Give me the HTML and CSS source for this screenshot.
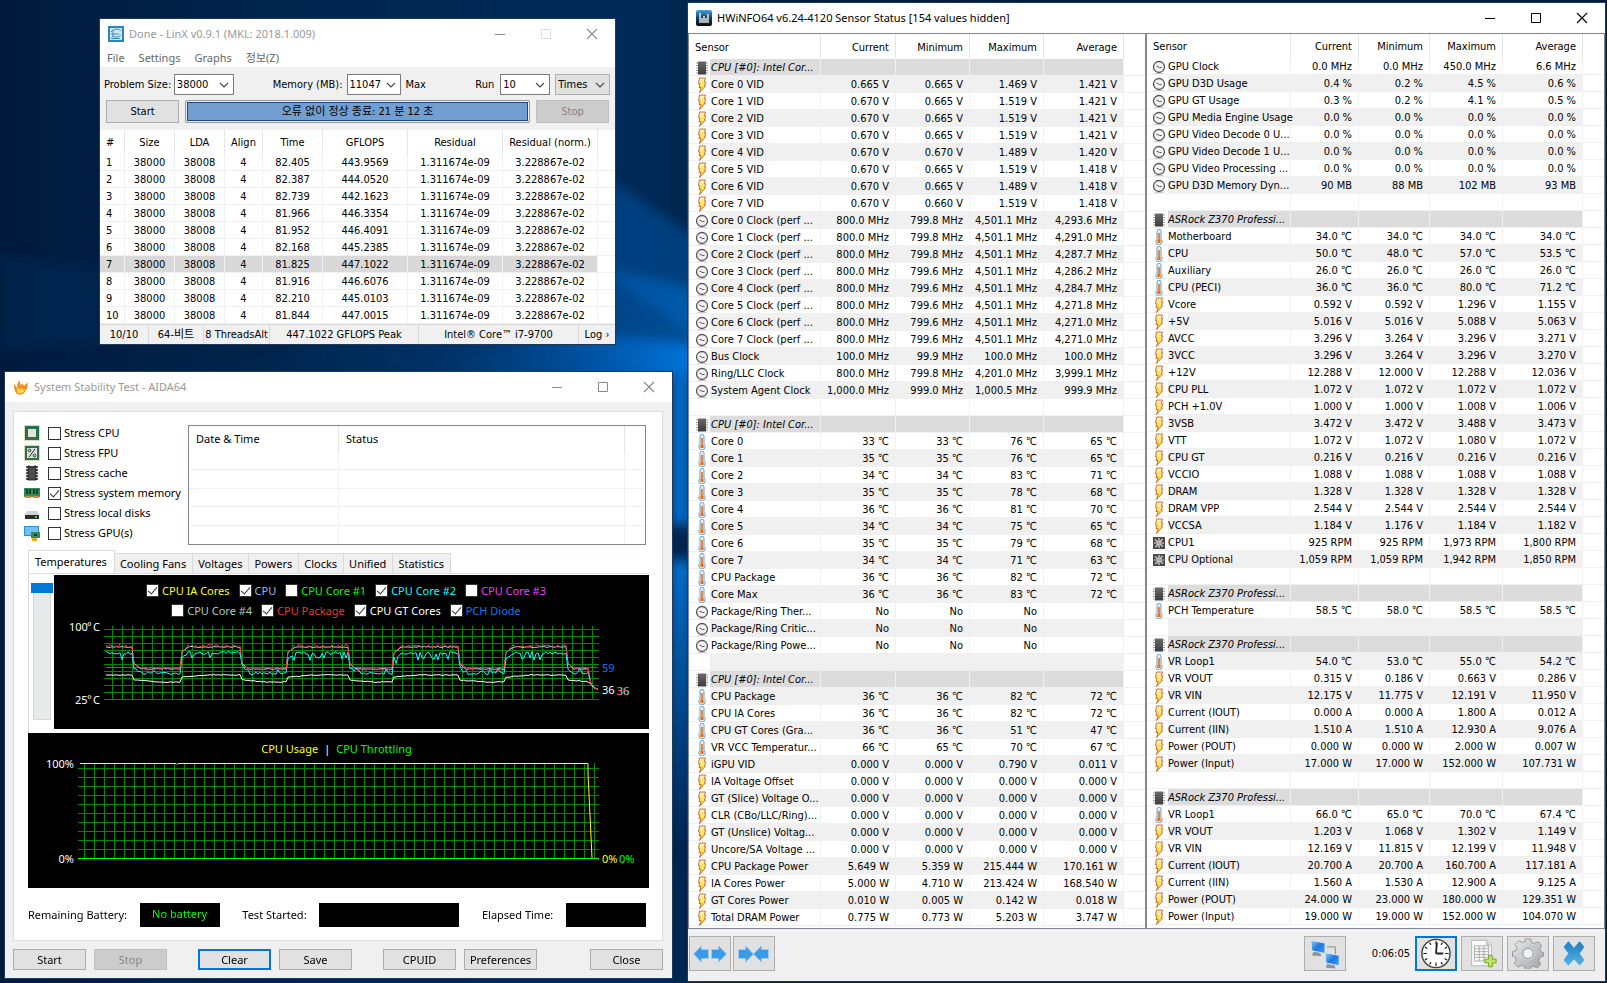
FILE: index.html
```html
<!DOCTYPE html>
<html lang="en">
<head>
<meta charset="utf-8">
<title>Desktop</title>
<link rel="stylesheet" href="styles.css">
</head>
<body>
<svg class="sprites" aria-hidden="true">
  <defs>
    <linearGradient id="gBolt" x1="0" y1="0" x2="0" y2="1"><stop offset="0" stop-color="#fff3c0"/><stop offset="1" stop-color="#ffd500"/></linearGradient>
    <linearGradient id="gChip" x1="0" y1="0" x2="0" y2="1"><stop offset="0" stop-color="#6a6a6a"/><stop offset="1" stop-color="#3c3c3c"/></linearGradient>
    <linearGradient id="gBlue" x1="0" y1="0" x2="1" y2="1"><stop offset="0" stop-color="#8fd0ff"/><stop offset=".5" stop-color="#1e78e0"/><stop offset="1" stop-color="#3fa0f4"/></linearGradient>
    <linearGradient id="gCross" x1="0" y1="0" x2="0" y2="1"><stop offset="0" stop-color="#1d7dbb"/><stop offset="1" stop-color="#55b4ec"/></linearGradient>
    <linearGradient id="gGear" x1="0" y1="0" x2="1" y2="1"><stop offset="0" stop-color="#e8ebec"/><stop offset="1" stop-color="#9da3a6"/></linearGradient>
    <linearGradient id="gHw" x1="0" y1="0" x2="0" y2="1"><stop offset="0" stop-color="#4aa3d8"/><stop offset=".5" stop-color="#14405c"/><stop offset="1" stop-color="#0a0a0a"/></linearGradient>
    <symbol id="bolt" viewBox="0 0 16 16"><path d="M5.500 1h6l-1.200 3.800h1.400L10.500 9h1L5.500 15.500l1.600-5H5l.8-3.700H4.500z" fill="url(#gBolt)" stroke="#c4622d" stroke-width=".9"/></symbol>
    <symbol id="clock" viewBox="0 0 16 16"><path d="M3.500 14.500h9" stroke="#ccc" stroke-width="1"/><circle cx="8" cy="8" r="5.500" fill="#f2f2f2" stroke="#555" stroke-width="1.300"/><path d="M5.500 7l3 1.500h2" fill="none" stroke="#555" stroke-width="1"/></symbol>
    <symbol id="thermo" viewBox="0 0 16 16"><path d="M6 2.200a2 2 0 0 1 4 0v8a3.200 3.200 0 1 1-4 0z" fill="#dff0fb" stroke="#6f9fc4" stroke-width="1"/><path d="M7.200 4h1.600v7h.8v3H6.400v-3h.8z" fill="#f26a12"/></symbol>
    <symbol id="chip" viewBox="0 0 16 16"><path d="M2 3h12M2 5.500h12M2 8h12M2 10.500h12M2 13h12" stroke="#999" stroke-width="1"/><path d="M4 1.500h8v13H4z" fill="url(#gChip)"/></symbol>
    <symbol id="fan" viewBox="0 0 16 16"><path d="M2 2h12v12H2z" fill="#4a4a4a"/><path d="M8 7V3M8 9v4M7 8H3M9 8h4M7 7L4 4.500M9 9l3 2.500M9 7l2.500-3M7 9l-2.500 3" stroke="#ddd" stroke-width="1.200"/><circle cx="8" cy="8" r="1.400" fill="#c9a0a0"/></symbol>
    <symbol id="chev" viewBox="0 0 10 6"><path d="M1 1l4 4 4-4" fill="none" stroke="#444" stroke-width="1.100"/></symbol>
    <symbol id="min" viewBox="0 0 12 12"><path d="M1 6.500h10" stroke="currentColor"/></symbol>
    <symbol id="max" viewBox="0 0 12 12"><path d="M1.500 1.500h9v9h-9z" fill="none" stroke="currentColor"/></symbol>
    <symbol id="close" viewBox="0 0 12 12"><path d="M1 1l10 10M11 1L1 11" stroke="currentColor" stroke-width="1.100"/></symbol>
    <symbol id="arrow" viewBox="0 0 16 18"><path d="M0.500 4.500h7V.8L15.500 9l-8 8.200v-3.700h-7z" fill="#3a9ae8" stroke="#a5cdea" stroke-width=".8"/></symbol>
  </defs>
</svg>

<main class="desktop">
  <svg class="wallpaper" viewBox="0 0 1607 983" preserveAspectRatio="none" aria-hidden="true">
    <defs>
      <linearGradient id="wpBase" x1="0" y1="0" x2="1" y2="0"><stop offset="0" stop-color="#001a3c"/><stop offset=".2" stop-color="#00264f"/><stop offset=".4" stop-color="#002a58"/><stop offset=".5" stop-color="#001a38"/></linearGradient>
      <linearGradient id="wpBeam" x1="0" y1="0" x2="1" y2="0"><stop offset="0" stop-color="#003a78" stop-opacity="0"/><stop offset=".5" stop-color="#0055a8" stop-opacity=".5"/><stop offset="1" stop-color="#0078e0"/></linearGradient>
      <linearGradient id="wpFade" x1="0" y1="0" x2="0" y2="1"><stop offset="0" stop-color="#0070d0"/><stop offset="1" stop-color="#00204a"/></linearGradient>
      <filter id="wpBlur"><feGaussianBlur stdDeviation="6"/></filter>
    </defs>
    <path d="M0 0h1607v983H0z" fill="url(#wpBase)"/>
    <g filter="url(#wpBlur)">
      <path d="M0 255L100 268V345L0 350z" fill="#003468" opacity=".35"/>
      <path d="M610 180L700 240V340L610 275z" fill="#004a90" opacity=".7"/>
      <path d="M200 372L615 270L700 290V380z" fill="url(#wpBeam)" opacity=".5"/>
      <path d="M560 330L700 345V378H400z" fill="url(#wpBeam)"/>
      <path d="M670 370h22v155h-22z" fill="#0068c4"/>
      <path d="M670 560h22v300h-22z" fill="url(#wpFade)"/>
    </g>
  </svg>

  <section class="window linx" aria-label="LinX">
    <header class="titlebar inactive">
      <svg class="app-icon" viewBox="0 0 16 16"><path d="M0 0h16v16H0z" fill="#2a86b8"/><path d="M2 2h12v12H2z" fill="#cfe6f2"/><path d="M3 6c3-4 9-3 10-1M3 8h8M4 10c3 2 7 1 9-1M5 4v7M3 12.500h9" stroke="#3b8fbd" fill="none"/></svg>
      <h1 class="title">Done - LinX v0.9.1 (MKL: 2018.1.009)</h1>
      <button class="cap" aria-label="Minimize"><svg><use href="#min"/></svg></button>
      <button class="cap faint" aria-label="Maximize" disabled><svg><use href="#max"/></svg></button>
      <button class="cap" aria-label="Close"><svg><use href="#close"/></svg></button>
    </header>
    <nav class="menu">
      <button>File</button><button>Settings</button><button>Graphs</button><button>정보(Z)</button>
    </nav>
    <div class="linx-body">
      <div class="linx-row">
        <label class="size" for="size">Problem Size:</label>
        <span class="combo w60"><select id="size"><option>38000</option></select><svg><use href="#chev"/></svg></span>
        <label class="mem" for="mem">Memory (MB):</label>
        <span class="combo w55"><select id="mem"><option>11047</option></select><svg><use href="#chev"/></svg></span>
        <span class="max">Max</span>
        <label class="run" for="run">Run</label>
        <span class="combo w50"><select id="run"><option>10</option></select><svg><use href="#chev"/></svg></span>
        <span class="combo w55 gray"><select id="unit" aria-label="Run unit"><option>Times</option></select><svg><use href="#chev"/></svg></span>
      </div>
      <div class="linx-row second">
        <button class="btn">Start</button>
        <div class="progress" role="status">오류 없이 정상 종료: 21 분 12 초</div>
        <button class="btn" disabled>Stop</button>
      </div>
    </div>
    <table class="runs">
      <colgroup><col class="c25"><col class="c50"><col class="c50"><col class="c38"><col class="c60"><col class="c85"><col class="c95"><col class="c95"><col></colgroup>
      <thead><tr><th>#</th><th>Size</th><th>LDA</th><th>Align</th><th>Time</th><th>GFLOPS</th><th>Residual</th><th>Residual (norm.)</th><th class="fill"></th></tr></thead>
      <tbody id="runs"></tbody>
    </table>
    <footer class="status">
      <span class="s49">10/10</span><span class="s55">64-비트</span><span class="s66">8 ThreadsAlt</span><span class="s150">447.1022 GFLOPS Peak</span><span class="sgrow">Intel® Core™ i7-9700</span><span class="s36">Log ›</span>
    </footer>
  </section>

  <section class="window aida" aria-label="System Stability Test">
    <header class="titlebar inactive">
      <svg class="app-icon" viewBox="0 0 16 16"><path d="M4 15C1 11 1 8 1 5l3 4c0-3 1-6 2-8l2 6 1-3 2 3 4-4c-1 4 0 7-4 11-2 2-5 2-7 1z" fill="#f58a1a"/><path d="M5 14c-2-3-1-5 0-6l2 3 2-3 1 3 2-1c0 2-2 5-7 4z" fill="#ffdb4a"/></svg>
      <h1 class="title">System Stability Test - AIDA64</h1>
      <button class="cap" aria-label="Minimize"><svg><use href="#min"/></svg></button>
      <button class="cap" aria-label="Maximize"><svg><use href="#max"/></svg></button>
      <button class="cap" aria-label="Close"><svg><use href="#close"/></svg></button>
    </header>
    <div class="aida-body">
      <div class="panel">
        <div class="top">
          <div class="stress">
            <label><svg viewBox="0 0 16 16"><path d="M.5.5h15v15H.5z" fill="none" stroke="#c9b45a" stroke-dasharray="1 1"/><path d="M1 1h14v14H1z" fill="#2c6e49"/><path d="M4 4h8v8H4z" fill="#dfe3df"/></svg><input type="checkbox">Stress CPU</label>
            <label><svg viewBox="0 0 16 16"><path d="M.5.5h15v15H.5z" fill="none" stroke="#c9b45a" stroke-dasharray="1 1"/><path d="M1 1h14v14H1z" fill="#2c6e49"/><path d="M3 3h10v10H3z" fill="#dfe3df"/><path d="M11 4l-6 8" stroke="#222"/><circle cx="5.500" cy="5.500" r="1.300" fill="none" stroke="#222"/><circle cx="10.500" cy="10.500" r="1.300" fill="none" stroke="#222"/></svg><input type="checkbox">Stress FPU</label>
            <label><svg viewBox="0 0 16 16"><path d="M2 2h12M2 5h12M2 8h12M2 11h12M2 14h12" stroke="#222" stroke-width="1.500"/><path d="M4 1h2l2 2 2-2h2v14H4z" fill="#4c4c4c" stroke="#111" stroke-width=".8"/></svg><input type="checkbox">Stress cache</label>
            <label><svg viewBox="0 0 16 16"><path d="M0 3h16v9H0z" fill="#2f8a5c"/><path d="M2 4h2v5H2zM5 4h2v5H5zM9 4h2v5H9zM12 4h2v5h-2z" fill="#173f2a"/><path d="M1 11h6v2H1zM9 11h6v2H9z" fill="#d98b3a"/></svg><input type="checkbox" checked>Stress system memory</label>
            <label><svg viewBox="0 0 16 16"><path d="M3 6h10l2 4H1z" fill="#cfd3d6"/><path d="M1 10h14v4H1z" fill="#2a2d30"/><path d="M11 11h2v2h-2z" fill="#4ad04a"/></svg><input type="checkbox">Stress local disks</label>
            <label><svg viewBox="0 0 16 16"><path d="M0 1h15v10H0z" fill="#2d8fd6"/><path d="M1 2h13v8H1z" fill="#6fc0f0"/><path d="M7 7h9v6H7z" fill="#2f8a5c"/><path d="M10 9h3v2h-3z" fill="#173f2a"/><path d="M8 13h5v3H8z" fill="#f0a820"/></svg><input type="checkbox">Stress GPU(s)</label>
          </div>
          <table class="log">
            <colgroup><col class="c150"><col><col class="c20"></colgroup>
            <thead><tr><th>Date &amp; Time</th><th>Status</th><th></th></tr></thead>
            <tbody><tr><td></td><td></td><td></td></tr><tr><td></td><td></td><td></td></tr><tr><td></td><td></td><td></td></tr><tr><td></td><td></td><td></td></tr><tr><td></td><td></td><td></td></tr></tbody>
          </table>
        </div>
        <div class="tabs" role="tablist">
          <button role="tab" class="on" aria-selected="true">Temperatures</button><button role="tab">Cooling Fans</button><button role="tab">Voltages</button><button role="tab">Powers</button><button role="tab">Clocks</button><button role="tab">Unified</button><button role="tab">Statistics</button>
        </div>
        <div class="page">
          <div class="slider"><span class="thumb"></span><span class="track"></span></div>
          <div class="graph">
            <div class="legend">
              <label class="yellow"><input type="checkbox" checked>CPU IA Cores</label>
              <label class="pale"><input type="checkbox" checked>CPU</label>
              <label class="green"><input type="checkbox">CPU Core #1</label>
              <label class="cyan"><input type="checkbox" checked>CPU Core #2</label>
              <label class="magenta"><input type="checkbox">CPU Core #3</label>
            </div>
            <div class="legend">
              <label class="sage"><input type="checkbox">CPU Core #4</label>
              <label class="red"><input type="checkbox" checked>CPU Package</label>
              <label class="white"><input type="checkbox" checked>CPU GT Cores</label>
              <label class="blue"><input type="checkbox" checked>PCH Diode</label>
            </div>
            <svg class="plot" id="temps" viewBox="54 621 595 108" role="img" aria-label="Temperatures graph"></svg>
          </div>
        </div>
        <div class="graph usage">
          <p class="usage-title"><span class="yellow">CPU Usage</span><span class="white">|</span><span class="green">CPU Throttling</span></p>
          <svg class="plot" id="usage" viewBox="28 758 621 130" role="img" aria-label="CPU usage graph"></svg>
        </div>
        <div class="info">
          <span>Remaining Battery:</span><output class="led w80">No battery</output>
          <span>Test Started:</span><output class="led w140"></output>
          <span>Elapsed Time:</span><output class="led w80"></output>
        </div>
      </div>
      <div class="actions">
        <button class="btn">Start</button><button class="btn" disabled>Stop</button>
        <button class="btn focus gap">Clear</button><button class="btn">Save</button>
        <button class="btn gap">CPUID</button><button class="btn">Preferences</button>
        <button class="btn end">Close</button>
      </div>
    </div>
  </section>

  <section class="window hwinfo" aria-label="HWiNFO64">
    <header class="titlebar">
      <svg class="app-icon" viewBox="0 0 16 16"><rect width="16" height="16" rx="2" fill="url(#gHw)"/><path d="M4 3v10M8 6v7M12 4v9M6 8v5M10 8v5" stroke="#fff" stroke-width="1.300"/></svg>
      <h1 class="title">HWiNFO64 v6.24-4120 Sensor Status [154 values hidden]</h1>
      <button class="cap" aria-label="Minimize"><svg><use href="#min"/></svg></button>
      <button class="cap" aria-label="Maximize"><svg><use href="#max"/></svg></button>
      <button class="cap" aria-label="Close"><svg><use href="#close"/></svg></button>
    </header>
    <div class="panes">
      <div class="pane left">
        <table class="sensors">
          <colgroup><col class="c132"><col class="c75"><col class="c74"><col class="c74"><col class="c80"><col></colgroup>
          <thead><tr><th>Sensor</th><th>Current</th><th>Minimum</th><th>Maximum</th><th>Average</th><th class="fill"></th></tr></thead>
          <tbody id="left"></tbody>
        </table>
      </div>
      <div class="pane right">
        <table class="sensors">
          <colgroup><col class="c144"><col class="c68"><col class="c71"><col class="c73"><col class="c80"><col></colgroup>
          <thead><tr><th>Sensor</th><th>Current</th><th>Minimum</th><th>Maximum</th><th>Average</th><th class="fill"></th></tr></thead>
          <tbody id="right"></tbody>
        </table>
      </div>
    </div>
    <footer class="tools">
      <div class="pair">
        <button class="tool" aria-label="Expand columns"><svg viewBox="0 0 34 31"><use href="#arrow" x="0" y="0" width="16" height="18" transform="translate(16 7) scale(-1 1)"/><use href="#arrow" x="18" y="7" width="16" height="18"/></svg></button>
        <button class="tool" aria-label="Shrink columns"><svg viewBox="0 0 34 31"><use href="#arrow" x="1" y="7" width="16" height="18"/><use href="#arrow" x="0" y="0" width="16" height="18" transform="translate(32 7) scale(-1 1)"/></svg></button>
      </div>
      <button class="tool push" aria-label="Remote monitoring"><svg viewBox="0 0 36 32"><path d="M20 9h9v10" fill="none" stroke="#888"/><path d="M6 14l7 1 1 4-10-1z" fill="#8d9499"/><path d="M3 2l15 3v11L4 13z" fill="url(#gBlue)" stroke="#dfe6ea"/><path d="M20 27l8 1 1 4-10-1z" fill="#8d9499"/><path d="M18 15l15 3v11l-14-3z" fill="url(#gBlue)" stroke="#dfe6ea"/></svg></button>
      <time class="elapsed">0:06:05</time>
      <button class="tool focus" aria-label="Reset clock"><svg viewBox="0 0 36 34"><circle cx="18" cy="17" r="15.500" fill="#fff" stroke="#3c3c3c" stroke-width="1.500"/><path d="M18 3v4M18 27v4M4 17h4M28 17h4M11 4.900l1.500 2.600M23.500 26.500l1.500 2.600M5.900 24l2.600-1.500M27.500 11.500l2.600-1.500M25 4.900l-1.500 2.600M12.500 26.500L11 29.100M30.100 24l-2.600-1.500M8.500 11.500L5.900 10" stroke="#222" stroke-width="1.300"/><path d="M18 17l1-12M18 17h8" stroke="#222" stroke-width="2" fill="none"/></svg></button>
      <button class="tool" aria-label="Save log"><svg viewBox="0 0 36 32"><path d="M7 2h16l5 5v22H7z" fill="#fafafa" stroke="#b5b5b5"/><path d="M23 2v5h5" fill="#ddd" stroke="#b5b5b5"/><path d="M10 8h15v16H10zM10 11h15M10 14h15M10 17h15M10 20h15M15 8v16M20 8v16" fill="none" stroke="#999" stroke-width=".8"/><path d="M25 18h4v4h4v4h-4v4h-4v-4h-4v-4h4z" fill="#c3e26a" stroke="#6fa51e"/></svg></button>
      <button class="tool" aria-label="Settings"><svg viewBox="0 0 36 34"><path d="M15 1h6l1 4 3 1 4-2 4 4-2 4 1 3 3 1v4l-4 1-1 4 2 4-4 4-4-2-3 1-1 3h-5l-1-4-3-1-4 2-4-4 2-4-1-3-3-1v-5l4-1 1-3-2-4 4-4 4 2 3-1z" fill="url(#gGear)" stroke="#8f9598"/><circle cx="18" cy="17" r="8" fill="#c7ccce"/><circle cx="18" cy="17" r="5.500" fill="#f2f2f2" stroke="#8f9598"/></svg></button>
      <button class="tool" aria-label="Close sensors"><svg viewBox="0 0 36 32"><path d="M7 9l5-6 6 7 6-7 5 6-5 7 5 7-5 6-6-7-6 7-5-6 5-7z" fill="url(#gCross)"/></svg></button>
    </footer>
  </section>
</main>
<script src="app.js"></script>
</body>
</html>
```

FILE: styles.css
```css
* { box-sizing: border-box; }
body { margin: 0; background: #001a3c; }
button, select, input, output { font: inherit; color: inherit; }
button { padding: 0; border: 0; background: none; }
.sprites { position: absolute; width: 0; height: 0; }
.desktop { position: relative; min-height: 100vh; overflow: hidden; font: 11px/16px "Noto Sans", "Noto Sans CJK KR", sans-serif; color: #000; }
.wallpaper { position: absolute; inset: 0; width: 100%; height: 100%; }

.window { position: absolute; background: #f0f0f0; outline: 1px solid #1d3a5a; }
.linx { left: 100px; top: 19px; width: 515px; font-family: "DejaVu Sans Condensed", "Noto Sans CJK KR", "Noto Sans", sans-serif; }
.aida { left: 5px; top: 372px; width: 667px; }
.hwinfo { left: 688px; right: 2px; top: 3px; font-family: "DejaVu Sans Condensed", "Noto Sans", sans-serif; }

.titlebar { display: flex; align-items: center; height: 30px; padding-left: 8px; background: #fff; }
.title { flex: 1; margin: 0; padding-left: 5px; font: 11px/16px "Noto Sans", sans-serif; white-space: nowrap; }
.inactive .title { color: #999; }
.app-icon { width: 16px; height: 16px; }
.cap { display: flex; align-items: center; justify-content: center; width: 46px; height: 30px; }
.cap svg { width: 12px; height: 12px; }
.inactive .cap { color: #8a8a8a; }
.inactive .faint { color: #ddd; }

.btn { height: 21px; width: 73px; border: 1px solid #adadad; background: #e1e1e1; text-align: center; line-height: 18px; }
.btn:disabled { background: #ccc; border-color: #bfbfbf; color: #838383; }
.btn.focus { border: 2px solid #0078d7; line-height: 16px; }

/* LinX */
.menu { display: flex; gap: 14px; height: 18px; padding-left: 7px; background: #fff; color: #666; font: 11px/18px "Noto Sans", "Noto Sans CJK KR", sans-serif; }
.linx-body { padding: 7px 5px 7px 4px; height: 63px; }
.linx-row { display: flex; align-items: center; height: 21px; white-space: nowrap; }
.linx-row.second { margin-top: 5px; height: 23px; gap: 6px; padding: 0 1px 0 2px; }
.linx-row .size { width: 70px; }
.linx-row .mem { width: 113px; padding-right: 4px; text-align: right; }
.linx-row .max { width: 74px; padding-left: 4px; }
.linx-row .run { width: 25px; }
.second .btn { height: 23px; }
.combo { display: grid; align-items: center; height: 21px; border: 1px solid #7a7a7a; background: #fff; }
.combo select { grid-area: 1 / 1; width: 100%; height: 19px; border: 0; padding: 0 2px; background: none; appearance: none; }
.combo svg { grid-area: 1 / 1; justify-self: end; width: 10px; height: 6px; margin-right: 4px; pointer-events: none; }
.combo.gray { margin-left: 5px; border-color: #adadad; background: #e1e1e1; }
.w60 { width: 60px; }
.w55 { width: 55px; }
.w50 { width: 50px; }
.progress { flex: 1; height: 23px; border: 1px solid #999; border-radius: 2px; padding: 0; background: #729fcf; box-shadow: inset 0 0 0 1px #f0f0f0, inset 0 0 0 2px #1b4588; text-align: center; line-height: 21px; }

table { border-collapse: separate; border-spacing: 0; table-layout: fixed; width: 100%; background: #fff; }
th, td { padding: 0; font-weight: normal; white-space: nowrap; overflow: hidden; }
th { padding-top: 2px; border-right: 1px solid #e5e5e5; }
td { height: 17px; padding-top: 2px; line-height: 14px; border-right: 1px solid #f0f0f0; border-bottom: 1px solid #f0f0f0; }
th.fill, td.fill { border-right: 0; }
.c20 { width: 20px; } .c25 { width: 25px; } .c38 { width: 38px; } .c50 { width: 50px; } .c60 { width: 60px; }
.c68 { width: 68px; } .c71 { width: 71px; } .c73 { width: 73px; } .c74 { width: 74px; } .c75 { width: 75px; }
.c80 { width: 80px; } .c85 { width: 85px; } .c95 { width: 95px; } .c132 { width: 132px; } .c144 { width: 144px; } .c150 { width: 150px; }
.runs th { height: 24px; text-align: center; }
.runs td { text-align: center; }
.runs th:first-child, .runs td:first-child { text-align: left; padding-left: 6px; }
.runs tr.sel td:not(.fill) { background: #d9d9d9; }
.status { display: flex; height: 20px; border-top: 1px solid #d9d9d9; line-height: 20px; text-align: center; white-space: nowrap; }
.status span { border-right: 1px solid #d9d9d9; overflow: hidden; }
.status span:last-child { border-right: 0; }
.s49 { width: 49px; } .s55 { width: 55px; } .s66 { width: 66px; } .s150 { width: 149px; } .sgrow { flex: 1; } .s36 { width: 36px; }

/* AIDA64 */
.aida-body { padding: 9px 9px 8px 8px; }
.panel { border: 1px solid #dcdcdc; background: #fff; padding: 13px 13px 13px 14px; }
.top { display: flex; justify-content: space-between; height: 120px; padding-right: 3px; }
.stress { display: flex; flex-direction: column; margin: -2px 0 0 -4px; }
.stress label { display: flex; align-items: center; height: 20px; white-space: nowrap; }
.stress svg { width: 16px; height: 16px; margin-right: 8px; }
input[type="checkbox"] { appearance: none; flex: none; width: 13px; height: 13px; margin: 0 3px 0 0; border: 1px solid #333; background: #fff; display: grid; place-items: center; }
input[type="checkbox"]:checked::before { content: ""; width: 4px; height: 8px; margin-bottom: 2px; border: solid #333; border-width: 0 1px 1px 0; transform: rotate(40deg); }
.log { width: 458px; height: 120px; border: 1px solid #828790; }
.log th { height: 26px; text-align: left; padding: 0 0 0 7px; }
.log td { height: 18px; padding: 0; line-height: 12px; }
.log th:last-child, .log td:last-child { border-right: 0; }
.log tr:last-child td { border-bottom: 0; }
.tabs { display: flex; align-items: flex-end; height: 23px; margin-top: 5px; }
.tabs button { height: 20px; padding: 0 6px 0 5px; border: 1px solid #d9d9d9; border-left: 0; border-bottom: 0; background: #f0f0f0; line-height: 18px; white-space: nowrap; }
.tabs .on { height: 23px; padding: 0 7px 0 6px; border-left: 1px solid #d9d9d9; background: #fff; }
.page { display: flex; border: 1px solid #dcdcdc; border-width: 1px 0 0 1px; height: 160px; }
.slider { display: flex; flex-direction: column; align-items: center; width: 25px; padding-top: 9px; }
.thumb { width: 22px; height: 10px; background: #0078d7; }
.track { width: 18px; height: 127px; border: 1px solid #d6d6d6; border-top: 0; background: #e7eaea; }
.graph { flex: 1; height: 154px; margin-top: 1px; background: #000; }
.legend { display: flex; justify-content: center; gap: 9px; height: 21px; padding-right: 11px; }
.legend:first-child { padding-top: 5px; height: 25px; }
.legend label { display: flex; align-items: center; height: 21px; white-space: nowrap; }
.plot { display: block; width: 100%; overflow: visible; }
.plot text { font: 11px "Noto Sans", sans-serif; }
.usage { height: 155px; margin-top: 0; }
.usage-title { display: flex; justify-content: center; gap: 6px; margin: 0; height: 25px; padding: 8px 4px 0 0; }
.yellow { color: #ff0; } .pale { color: #9ab8f0; } .green { color: #0f0; } .cyan { color: #0ff; } .magenta { color: #f03cf0; }
.sage { color: #b4c8b4; } .red { color: #f03030; } .white { color: #fff; } .blue { color: #0a78f0; }
.info { display: flex; align-items: center; justify-content: space-between; margin: 15px 3px 0 0; height: 24px; }
.led { height: 24px; background: #000; color: #0f0; text-align: center; line-height: 22px; margin-left: -10px; }
.w80 { width: 80px; } .w140 { width: 140px; }
.actions { display: flex; gap: 8px; margin-top: 8px; }
.actions .gap { margin-left: 23px; }
.actions .end { margin-left: auto; }

/* HWiNFO */
.panes { display: flex; }
.pane { border: 1px solid #828790; padding-bottom: 2px; background: #fff; min-width: 0; }
.pane.left { flex: 458 1 0; }
.pane.right { flex: 459 1 0; padding-bottom: 3px; }
.left .sensors th { height: 25px; }
.right .sensors th { height: 24px; }
.sensors th, .sensors td { text-align: right; padding-right: 6px; }
.sensors th:first-child { text-align: left; padding-left: 6px; }
.sensors td:first-child { text-align: left; padding-left: 5px; padding-right: 0; overflow: visible; }
.name { display: flex; align-items: center; height: 14px; gap: 1px; }
.name svg { flex: none; width: 16px; height: 16px; }
.right .sensors td:first-child { padding-left: 4px; }
.shade td:not(.fill) { background: #f0f0f0; }
.head td:not(.fill) { background: #dcdcdc; font-style: italic; }
.shade td:first-child:not(.fill) { background: linear-gradient(90deg, #fff 21px, #f0f0f0 21px); }
.head td:first-child:not(.fill) { background: linear-gradient(90deg, #fff 21px, #dcdcdc 21px); }
.tools { display: flex; align-items: center; gap: 4px; height: 52px; padding: 0 10px 3px 1px; }
.pair { display: flex; gap: 2px; }
.tool { display: grid; place-items: center; width: 42px; height: 35px; border: 1px solid #adadad; background: #e1e1e1; }
.tool.focus { border: 2px solid #0078d7; }
.tool svg { width: 34px; height: 31px; }
.push { margin-left: auto; }
.elapsed { width: 61px; text-align: right; padding-right: 1px; }
```

FILE: app.js
```js
const ICONS = { v: "bolt", c: "clock", t: "thermo", h: "chip", f: "fan" };

// icon | name | current | minimum | maximum | average
const LEFT = `h|CPU [#0]: Intel Cor...
v|Core 0 VID|0.665 V|0.665 V|1.469 V|1.421 V
v|Core 1 VID|0.670 V|0.665 V|1.519 V|1.421 V
v|Core 2 VID|0.670 V|0.665 V|1.519 V|1.421 V
v|Core 3 VID|0.670 V|0.665 V|1.519 V|1.421 V
v|Core 4 VID|0.670 V|0.670 V|1.489 V|1.420 V
v|Core 5 VID|0.670 V|0.665 V|1.519 V|1.418 V
v|Core 6 VID|0.670 V|0.665 V|1.489 V|1.418 V
v|Core 7 VID|0.670 V|0.660 V|1.519 V|1.418 V
c|Core 0 Clock (perf ...|800.0 MHz|799.8 MHz|4,501.1 MHz|4,293.6 MHz
c|Core 1 Clock (perf ...|800.0 MHz|799.8 MHz|4,501.1 MHz|4,291.0 MHz
c|Core 2 Clock (perf ...|800.0 MHz|799.8 MHz|4,501.1 MHz|4,287.7 MHz
c|Core 3 Clock (perf ...|800.0 MHz|799.6 MHz|4,501.1 MHz|4,286.2 MHz
c|Core 4 Clock (perf ...|800.0 MHz|799.6 MHz|4,501.1 MHz|4,284.7 MHz
c|Core 5 Clock (perf ...|800.0 MHz|799.6 MHz|4,501.1 MHz|4,271.8 MHz
c|Core 6 Clock (perf ...|800.0 MHz|799.6 MHz|4,501.1 MHz|4,271.0 MHz
c|Core 7 Clock (perf ...|800.0 MHz|799.6 MHz|4,501.1 MHz|4,271.0 MHz
c|Bus Clock|100.0 MHz|99.9 MHz|100.0 MHz|100.0 MHz
c|Ring/LLC Clock|800.0 MHz|799.8 MHz|4,201.0 MHz|3,999.1 MHz
c|System Agent Clock|1,000.0 MHz|999.0 MHz|1,000.5 MHz|999.9 MHz

h|CPU [#0]: Intel Cor...
t|Core 0|33 ℃|33 ℃|76 ℃|65 ℃
t|Core 1|35 ℃|35 ℃|76 ℃|65 ℃
t|Core 2|34 ℃|34 ℃|83 ℃|71 ℃
t|Core 3|35 ℃|35 ℃|78 ℃|68 ℃
t|Core 4|36 ℃|36 ℃|81 ℃|70 ℃
t|Core 5|34 ℃|34 ℃|75 ℃|65 ℃
t|Core 6|35 ℃|35 ℃|79 ℃|68 ℃
t|Core 7|34 ℃|34 ℃|71 ℃|63 ℃
t|CPU Package|36 ℃|36 ℃|82 ℃|72 ℃
t|Core Max|36 ℃|36 ℃|83 ℃|72 ℃
c|Package/Ring Ther...|No|No|No|
c|Package/Ring Critic...|No|No|No|
c|Package/Ring Powe...|No|No|No|

h|CPU [#0]: Intel Cor...
t|CPU Package|36 ℃|36 ℃|82 ℃|72 ℃
t|CPU IA Cores|36 ℃|36 ℃|82 ℃|72 ℃
t|CPU GT Cores (Gra...|36 ℃|36 ℃|51 ℃|47 ℃
t|VR VCC Temperatur...|66 ℃|65 ℃|70 ℃|67 ℃
v|iGPU VID|0.000 V|0.000 V|0.790 V|0.011 V
v|IA Voltage Offset|0.000 V|0.000 V|0.000 V|0.000 V
v|GT (Slice) Voltage O...|0.000 V|0.000 V|0.000 V|0.000 V
v|CLR (CBo/LLC/Ring)...|0.000 V|0.000 V|0.000 V|0.000 V
v|GT (Unslice) Voltag...|0.000 V|0.000 V|0.000 V|0.000 V
v|Uncore/SA Voltage ...|0.000 V|0.000 V|0.000 V|0.000 V
v|CPU Package Power|5.649 W|5.359 W|215.444 W|170.161 W
v|IA Cores Power|5.000 W|4.710 W|213.424 W|168.540 W
v|GT Cores Power|0.010 W|0.005 W|0.142 W|0.018 W
v|Total DRAM Power|0.775 W|0.773 W|5.203 W|3.747 W`;

const RIGHT = `c|GPU Clock|0.0 MHz|0.0 MHz|450.0 MHz|6.6 MHz
c|GPU D3D Usage|0.4 %|0.2 %|4.5 %|0.6 %
c|GPU GT Usage|0.3 %|0.2 %|4.1 %|0.5 %
c|GPU Media Engine Usage|0.0 %|0.0 %|0.0 %|0.0 %
c|GPU Video Decode 0 U...|0.0 %|0.0 %|0.0 %|0.0 %
c|GPU Video Decode 1 U...|0.0 %|0.0 %|0.0 %|0.0 %
c|GPU Video Processing ...|0.0 %|0.0 %|0.0 %|0.0 %
c|GPU D3D Memory Dyn...|90 MB|88 MB|102 MB|93 MB

h|ASRock Z370 Professi...
t|Motherboard|34.0 ℃|34.0 ℃|34.0 ℃|34.0 ℃
t|CPU|50.0 ℃|48.0 ℃|57.0 ℃|53.5 ℃
t|Auxiliary|26.0 ℃|26.0 ℃|26.0 ℃|26.0 ℃
t|CPU (PECI)|36.0 ℃|36.0 ℃|80.0 ℃|71.2 ℃
v|Vcore|0.592 V|0.592 V|1.296 V|1.155 V
v|+5V|5.016 V|5.016 V|5.088 V|5.063 V
v|AVCC|3.296 V|3.264 V|3.296 V|3.271 V
v|3VCC|3.296 V|3.264 V|3.296 V|3.270 V
v|+12V|12.288 V|12.000 V|12.288 V|12.036 V
v|CPU PLL|1.072 V|1.072 V|1.072 V|1.072 V
v|PCH +1.0V|1.000 V|1.000 V|1.008 V|1.006 V
v|3VSB|3.472 V|3.472 V|3.488 V|3.473 V
v|VTT|1.072 V|1.072 V|1.080 V|1.072 V
v|CPU GT|0.216 V|0.216 V|0.216 V|0.216 V
v|VCCIO|1.088 V|1.088 V|1.088 V|1.088 V
v|DRAM|1.328 V|1.328 V|1.328 V|1.328 V
v|DRAM VPP|2.544 V|2.544 V|2.544 V|2.544 V
v|VCCSA|1.184 V|1.176 V|1.184 V|1.182 V
f|CPU1|925 RPM|925 RPM|1,973 RPM|1,800 RPM
f|CPU Optional|1,059 RPM|1,059 RPM|1,942 RPM|1,850 RPM

h|ASRock Z370 Professi...
t|PCH Temperature|58.5 ℃|58.0 ℃|58.5 ℃|58.5 ℃

h|ASRock Z370 Professi...
t|VR Loop1|54.0 ℃|53.0 ℃|55.0 ℃|54.2 ℃
v|VR VOUT|0.315 V|0.186 V|0.663 V|0.286 V
v|VR VIN|12.175 V|11.775 V|12.191 V|11.950 V
v|Current (IOUT)|0.000 A|0.000 A|1.800 A|0.012 A
v|Current (IIN)|1.510 A|1.510 A|12.930 A|9.076 A
v|Power (POUT)|0.000 W|0.000 W|2.000 W|0.007 W
v|Power (Input)|17.000 W|17.000 W|152.000 W|107.731 W

h|ASRock Z370 Professi...
t|VR Loop1|66.0 ℃|65.0 ℃|70.0 ℃|67.4 ℃
v|VR VOUT|1.203 V|1.068 V|1.302 V|1.149 V
v|VR VIN|12.169 V|11.815 V|12.199 V|11.948 V
v|Current (IOUT)|20.700 A|20.700 A|160.700 A|117.181 A
v|Current (IIN)|1.560 A|1.530 A|12.900 A|9.125 A
v|Power (POUT)|24.000 W|23.000 W|180.000 W|129.351 W
v|Power (Input)|19.000 W|19.000 W|152.000 W|104.070 W`;

function fillSensors(id, text) {
  document.getElementById(id).innerHTML = text.split("\n").map((line, i) => {
    const [kind, name = "", ...vals] = line.split("|");
    const cls = kind === "h" ? "head" : i % 2 ? "shade" : "";
    const icon = kind ? `<svg><use href="#${ICONS[kind]}"/></svg>` : "";
    const cells = [0, 1, 2, 3].map(n => `<td>${vals[n] || ""}</td>`).join("");
    return `<tr class="${cls}"><td><span class="name">${icon}${name}</span></td>${cells}<td class="fill"></td></tr>`;
  }).join("");
}
fillSensors("left", LEFT);
fillSensors("right", RIGHT);

const RUNS = [["82.405", "443.9569"], ["82.387", "444.0520"], ["82.739", "442.1623"], ["81.966", "446.3354"], ["81.952", "446.4091"],
  ["82.168", "445.2385"], ["81.825", "447.1022"], ["81.916", "446.6076"], ["82.210", "445.0103"], ["81.844", "447.0015"]];
document.getElementById("runs").innerHTML = RUNS.map(([t, g], i) =>
  `<tr class="${i === 6 ? "sel" : ""}"><td>${i + 1}</td><td>38000</td><td>38008</td><td>4</td><td>${t}</td><td>${g}</td><td>1.311674e-09</td><td>3.228867e-02</td><td class="fill"></td></tr>`).join("");

function grid(x0, x1, xs, top, ys, bottom) {
  let d = "";
  for (let x = xs; x < x1; x += 10) d += `M${x + .5} ${top}V${bottom}`;
  for (const y of ys) d += `M${x0} ${y + .5}H${x1}`;
  return `<path d="${d}" stroke="#008a00" fill="none" shape-rendering="crispEdges"/>`;
}

let seed = 7;
const rnd = () => (seed = (seed * 16807) % 2147483647) / 2147483647;
// Load edges: even entries are falls, odd entries are rises.
const EDGES = [133, 180, 241, 287, 348, 393, 458, 505, 566];
function series(high, low, noise, spike, ramp) {
  const pts = [];
  for (let x = 106; x < 590; x += 2) {
    const n = EDGES.filter(e => e < x).length;
    const last = n ? EDGES[n - 1] : 0;
    const since = x - last;
    let y = n % 2 ? low : high;
    if (n && since < ramp) y += (n % 2 ? -1 : 1) * (low - high) * (1 - since / ramp) * .3;
    y += (rnd() - .5) * noise;
    if (rnd() < .14) y += spike * (n % 2 ? -.6 : 1);
    pts.push(`${x},${y.toFixed(1)}`);
  }
  return pts.concat("591,684", "594,688", "598,689").join(" ");
}
const line = (points, color, extra = "") => `<polyline points="${points}" fill="none" stroke="${color}" ${extra}/>`;

document.getElementById("temps").innerHTML =
  grid(104, 599, 112, 626, [0, 1, 2, 3, 4, 5, 6, 7, 8, 9, 10].map(n => 629 + n * 7), 700) +
  line("106,667.5 598,667.5", "#0a78f0") +
  line(series(653, 673, 3, 6, 8), "#00ffff") +
  line(series(675, 682, .8, 0, 26), "#ffffff") +
  line(series(647, 669, 1, 0, 8), "#a8c4f8") +
  line(series(646, 669, 3, -1, 8), "#ff3030", 'stroke-dasharray="8 2"') +
  `<g fill="#fff"><text x="69" y="631">100</text><text x="87" y="630">°</text><text x="93" y="631">C</text>
   <text x="75" y="704">25</text><text x="87" y="703">°</text><text x="93" y="704">C</text><text x="602" y="694">36</text></g>
   <text x="602" y="672" fill="#0a78f0">59</text><text x="617" y="695" fill="#0ff">36</text><text x="616" y="695" fill="#ff3030">36</text>`;

document.getElementById("usage").innerHTML =
  grid(78, 599, 84, 763, [0, 1, 2, 3, 4, 5, 6, 7, 8, 9].map(n => 768 + n * 9), 859) +
  `<path d="M78 858.5H599" stroke="#00ff00"/>` +
  line("80,763.5 176,763.5 177,764.5 178,763.5 588,763.5 588,773 592,858", "#ffff00") +
  `<g fill="#fff"><text x="74" y="768" text-anchor="end">100%</text><text x="74" y="863" text-anchor="end">0%</text></g>
   <text x="602" y="863" fill="#ff0">0%</text><text x="619" y="863" fill="#0f0">0%</text>`;
```
